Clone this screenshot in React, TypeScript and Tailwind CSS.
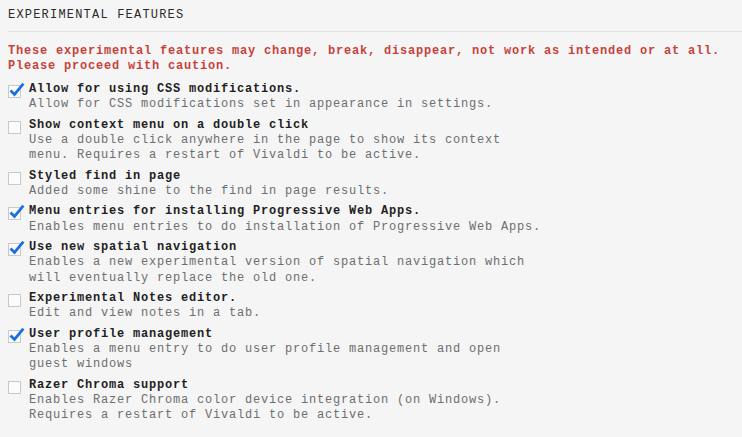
import React from "react";

type Item = { title: string; desc: string[]; checked: boolean };

const items: Item[] = [
  { title: "Allow for using CSS modifications.", desc: ["Allow for CSS modifications set in appearance in settings."], checked: true },
  { title: "Show context menu on a double click", desc: ["Use a double click anywhere in the page to show its context", "menu. Requires a restart of Vivaldi to be active."], checked: false },
  { title: "Styled find in page", desc: ["Added some shine to the find in page results."], checked: false },
  { title: "Menu entries for installing Progressive Web Apps.", desc: ["Enables menu entries to do installation of Progressive Web Apps."], checked: true },
  { title: "Use new spatial navigation", desc: ["Enables a new experimental version of spatial navigation which", "will eventually replace the old one."], checked: true },
  { title: "Experimental Notes editor.", desc: ["Edit and view notes in a tab."], checked: false },
  { title: "User profile management", desc: ["Enables a menu entry to do user profile management and open", "guest windows"], checked: true },
  { title: "Razer Chroma support", desc: ["Enables Razer Chroma color device integration (on Windows).", "Requires a restart of Vivaldi to be active."], checked: false },
];

function Check({ checked }: { checked: boolean }) {
  return (
    <div className="relative mt-[3px] h-[13px] w-[13px] shrink-0 border border-[#c9c9c9] bg-[#fbfbfb]">
      {checked && (
        <svg className="absolute left-[0px] top-[-3px]" width="16" height="15" viewBox="0 0 16 15">
          <path d="M2.5 8.5 L5.5 11.5 L13.5 1.8" fill="none" stroke="#1a6fe0" strokeWidth="2.8" strokeLinecap="square" />
        </svg>
      )}
    </div>
  );
}

export default function App() {
  return (
    <div
      className="min-h-[437px] w-full bg-[#f5f5f5] px-2 pt-[7px] text-[12px]"
      style={{ fontFamily: '"Liberation Mono", "DejaVu Sans Mono", monospace' }}
    >
      <div className="text-[12px] leading-[16px] tracking-[1.2px] text-[#2a2a2a]">EXPERIMENTAL FEATURES</div>
      <div className="mr-[-8px] mt-[8px] h-px bg-[#e3e3e3]" />
      <div className="mt-[12px] font-bold leading-[15px] tracking-[0.8px] text-[#c6433b]">
        <div>These experimental features may change, break, disappear, not work as intended or at all.</div>
        <div>Please proceed with caution.</div>
      </div>
      <div className="mt-[8px] flex flex-col gap-[5px]">
        {items.map((it) => (
          <div key={it.title} className="flex gap-2 leading-[15.33px] tracking-[0.8px]">
            <Check checked={it.checked} />
            <div>
              <div className="font-bold text-[#1f1f1f]">{it.title}</div>
              {it.desc.map((d) => (
                <div key={d} className="text-[#6e6e6e]">{d}</div>
              ))}
            </div>
          </div>
        ))}
      </div>
    </div>
  );
}
